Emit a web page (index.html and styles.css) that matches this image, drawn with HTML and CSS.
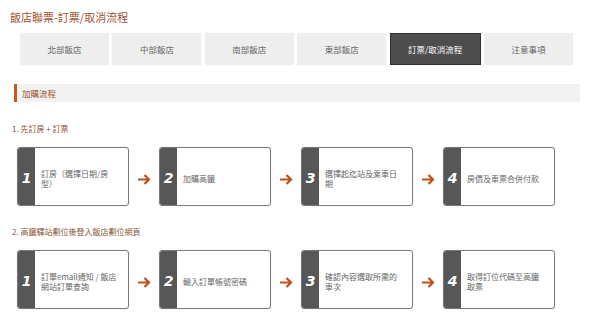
FILE: index.html
```html
<!DOCTYPE html>
<html lang="zh-Hant">
<head>
<meta charset="utf-8">
<link rel="stylesheet" href="styles.css">
</head>
<body>
<h1 class="title">飯店聯票-訂票/取消流程</h1>
<nav class="tabs">
  <div class="tab">北部飯店</div>
  <div class="tab">中部飯店</div>
  <div class="tab">南部飯店</div>
  <div class="tab">東部飯店</div>
  <div class="tab active">訂票/取消流程</div>
  <div class="tab">注意事項</div>
</nav>
<div class="section-head">加購流程</div>

<div class="step-title">1. 先訂房 + 訂票</div>
<div class="row">
  <div class="box"><div class="num">1</div><div class="text">訂房（選擇日期/房型）</div></div>
  <div class="arrow"><svg width="14" height="11" viewBox="0 0 14 11"><path d="M1 5.5H12M7.5 1L12 5.5L7.5 10" fill="none" stroke="#c0501e" stroke-width="2.2"/></svg></div>
  <div class="box"><div class="num">2</div><div class="text">加購高鐵</div></div>
  <div class="arrow"><svg width="14" height="11" viewBox="0 0 14 11"><path d="M1 5.5H12M7.5 1L12 5.5L7.5 10" fill="none" stroke="#c0501e" stroke-width="2.2"/></svg></div>
  <div class="box"><div class="num">3</div><div class="text">選擇起迄站及乘車日期</div></div>
  <div class="arrow"><svg width="14" height="11" viewBox="0 0 14 11"><path d="M1 5.5H12M7.5 1L12 5.5L7.5 10" fill="none" stroke="#c0501e" stroke-width="2.2"/></svg></div>
  <div class="box"><div class="num">4</div><div class="text">房價及車票合併付款</div></div>
</div>

<div class="step-title second">2. 高鐵驛站劃位後登入飯店劃位網頁</div>
<div class="row">
  <div class="box"><div class="num">1</div><div class="text">訂單email通知 / 飯店網站訂單查詢</div></div>
  <div class="arrow"><svg width="14" height="11" viewBox="0 0 14 11"><path d="M1 5.5H12M7.5 1L12 5.5L7.5 10" fill="none" stroke="#c0501e" stroke-width="2.2"/></svg></div>
  <div class="box"><div class="num">2</div><div class="text">輸入訂單帳號密碼</div></div>
  <div class="arrow"><svg width="14" height="11" viewBox="0 0 14 11"><path d="M1 5.5H12M7.5 1L12 5.5L7.5 10" fill="none" stroke="#c0501e" stroke-width="2.2"/></svg></div>
  <div class="box"><div class="num">3</div><div class="text">確認內容選取所需的車次</div></div>
  <div class="arrow"><svg width="14" height="11" viewBox="0 0 14 11"><path d="M1 5.5H12M7.5 1L12 5.5L7.5 10" fill="none" stroke="#c0501e" stroke-width="2.2"/></svg></div>
  <div class="box"><div class="num">4</div><div class="text">取得訂位代碼至高鐵取票</div></div>
</div>
</body>
</html>
```
FILE: styles.css
```css
* { box-sizing: border-box; }
html, body { margin: 0; padding: 0; background: #fff; }
body {
  font-family: "Noto Sans CJK TC", "Noto Sans", sans-serif;
  width: 600px;
  height: 336px;
  overflow: hidden;
}
.title {
  margin: 0;
  padding: 9px 0 0 10px;
  font-size: 11px;
  line-height: 16px;
  font-weight: normal;
  color: #a0532d;
}
.tabs {
  display: flex;
  gap: 3.5px;
  margin: 8px 0 0 20px;
  width: 553px;
}
.tab {
  flex: 1;
  height: 32px;
  display: flex;
  align-items: center;
  justify-content: center;
  background: #eeeeee;
  color: #666;
  font-size: 8.5px;
  box-shadow: 0 0 1px rgba(0,0,0,0.08);
}
.tab.active {
  background: #4e4e4e;
  color: #fff;
  border: 1px solid #2e2e2e;
}
.section-head {
  margin: 19px 20px 0 14px;
  height: 18px;
  line-height: 18px;
  background: #f1f1f1;
  border-left: 3px solid #c25a1c;
  padding-left: 5px;
  font-size: 8.5px;
  color: #a0532d;
}
.step-title {
  margin: 21px 0 0 12px;
  font-size: 8px;
  line-height: 12px;
  color: #8a5535;
}
.step-title.second { margin-top: 20px; }
.row {
  display: flex;
  align-items: center;
  margin: 12px 0 0 17px;
}
.box {
  width: 112px;
  height: 59px;
  display: flex;
  border: 1px solid #7a7a7a;
  border-radius: 3px;
  overflow: hidden;
  background: #fff;
  box-shadow: 0 0 2px rgba(0,0,0,0.12);
}
.num {
  width: 17px;
  flex: none;
  background: #575757;
  color: #fff;
  font-family: "DejaVu Sans", sans-serif;
  font-weight: bold;
  font-style: italic;
  font-size: 14px;
  display: flex;
  align-items: center;
  justify-content: center;
  padding-top: 3px;
}
.text {
  width: 82px;
  padding: 5px 0 0 6px;
  display: flex;
  align-items: center;
  font-size: 8px;
  line-height: 10px;
  color: #666;
}
.arrow {
  width: 30px;
  display: flex;
  justify-content: center;
  padding-top: 5px;
}
.arrow svg { display: block; }
```
